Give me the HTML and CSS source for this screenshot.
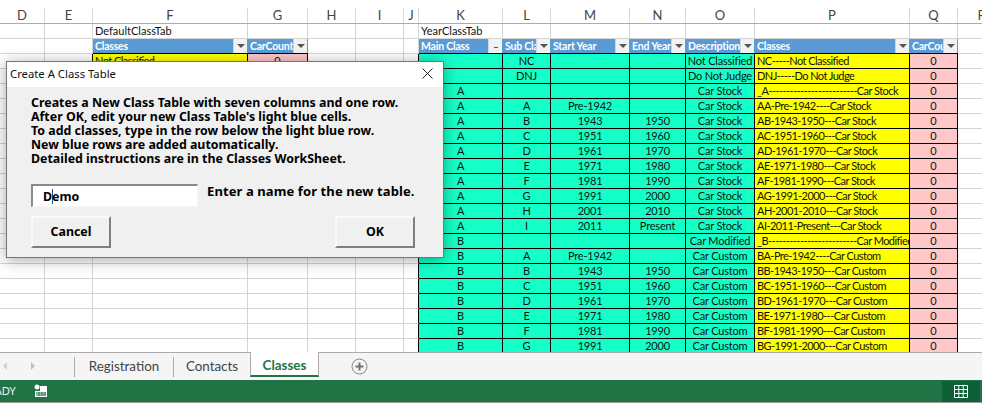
FILE: index.html
```html
<!DOCTYPE html>
<html lang="en">

<head>
    <meta charset="UTF-8">
    <meta name="viewport" content="width=device-width, initial-scale=1.0">
    <title>Create A Class Table</title>
    <link rel="stylesheet" href="styles.css">
</head>

<body>
    <div class="app">
        <div class="sheet">
            <table class="grid">
                <colgroup>
                    <col class="w45"><col class="w48"><col class="w155"><col class="w60"><col class="w48"><col class="w48"><col class="w15">
                    <col class="w84"><col class="w48"><col class="w79"><col class="w56"><col class="w69"><col class="w155"><col class="w48"><col class="w48">
                </colgroup>
                <thead>
                    <tr>
                        <th><div>D</div></th><th><div>E</div></th><th><div>F</div></th><th><div>G</div></th><th><div>H</div></th><th><div>I</div></th><th><div>J</div></th>
                        <th><div>K</div></th><th><div>L</div></th><th><div>M</div></th><th><div>N</div></th><th><div>O</div></th><th><div>P</div></th><th><div>Q</div></th><th><div>R</div></th>
                    </tr>
                </thead>
                <tbody>
                    <tr><td></td><td></td><td>DefaultClassTab</td><td></td><td></td><td></td><td></td><td>YearClassTab</td><td></td><td></td><td></td><td></td><td></td><td></td><td></td></tr>
                    <tr class="heads">
                        <td></td><td></td>
                        <td class="head"><div class="head-in"><span>Classes</span><i class="filter"></i></div></td>
                        <td class="head"><div class="head-in"><span>CarCount</span><i class="filter"></i></div></td>
                        <td></td><td></td><td></td>
                        <td class="head"><div class="head-in"><span>Main Class</span><i class="filter sorted"></i></div></td>
                        <td class="head"><div class="head-in"><span>Sub Class</span><i class="filter"></i></div></td>
                        <td class="head"><div class="head-in"><span>Start Year</span><i class="filter"></i></div></td>
                        <td class="head"><div class="head-in"><span>End Year</span><i class="filter"></i></div></td>
                        <td class="head"><div class="head-in"><span>Description</span><i class="filter"></i></div></td>
                        <td class="head"><div class="head-in"><span>Classes</span><i class="filter"></i></div></td>
                        <td class="head"><div class="head-in"><span>CarCount</span><i class="filter"></i></div></td>
                        <td></td>
                    </tr>
                    <tr><td></td><td class="edge"></td><td class="yel">Not Classified</td><td class="pink">0</td><td></td><td></td><td class="edge"></td><td class="teal"></td><td class="teal">NC</td><td class="teal"></td><td class="teal"></td><td class="teal">Not Classified</td><td class="yel">NC-----Not Classified</td><td class="pink">0</td><td></td></tr>
                    <tr><td></td><td></td><td></td><td></td><td></td><td></td><td class="edge"></td><td class="teal"></td><td class="teal">DNJ</td><td class="teal"></td><td class="teal"></td><td class="teal">Do Not Judge</td><td class="yel">DNJ-----Do Not Judge</td><td class="pink">0</td><td></td></tr>
                    <tr><td></td><td></td><td></td><td></td><td></td><td></td><td class="edge"></td><td class="teal">A</td><td class="teal"></td><td class="teal"></td><td class="teal"></td><td class="teal">Car Stock</td><td class="yel">_A-------------------------Car Stock</td><td class="pink">0</td><td></td></tr>
                    <tr><td></td><td></td><td></td><td></td><td></td><td></td><td class="edge"></td><td class="teal">A</td><td class="teal">A</td><td class="teal">Pre-1942</td><td class="teal"></td><td class="teal">Car Stock</td><td class="yel">AA-Pre-1942----Car Stock</td><td class="pink">0</td><td></td></tr>
                    <tr><td></td><td></td><td></td><td></td><td></td><td></td><td class="edge"></td><td class="teal">A</td><td class="teal">B</td><td class="teal">1943</td><td class="teal">1950</td><td class="teal">Car Stock</td><td class="yel">AB-1943-1950---Car Stock</td><td class="pink">0</td><td></td></tr>
                    <tr><td></td><td></td><td></td><td></td><td></td><td></td><td class="edge"></td><td class="teal">A</td><td class="teal">C</td><td class="teal">1951</td><td class="teal">1960</td><td class="teal">Car Stock</td><td class="yel">AC-1951-1960---Car Stock</td><td class="pink">0</td><td></td></tr>
                    <tr><td></td><td></td><td></td><td></td><td></td><td></td><td class="edge"></td><td class="teal">A</td><td class="teal">D</td><td class="teal">1961</td><td class="teal">1970</td><td class="teal">Car Stock</td><td class="yel">AD-1961-1970---Car Stock</td><td class="pink">0</td><td></td></tr>
                    <tr><td></td><td></td><td></td><td></td><td></td><td></td><td class="edge"></td><td class="teal">A</td><td class="teal">E</td><td class="teal">1971</td><td class="teal">1980</td><td class="teal">Car Stock</td><td class="yel">AE-1971-1980---Car Stock</td><td class="pink">0</td><td></td></tr>
                    <tr><td></td><td></td><td></td><td></td><td></td><td></td><td class="edge"></td><td class="teal">A</td><td class="teal">F</td><td class="teal">1981</td><td class="teal">1990</td><td class="teal">Car Stock</td><td class="yel">AF-1981-1990---Car Stock</td><td class="pink">0</td><td></td></tr>
                    <tr><td></td><td></td><td></td><td></td><td></td><td></td><td class="edge"></td><td class="teal">A</td><td class="teal">G</td><td class="teal">1991</td><td class="teal">2000</td><td class="teal">Car Stock</td><td class="yel">AG-1991-2000---Car Stock</td><td class="pink">0</td><td></td></tr>
                    <tr><td></td><td></td><td></td><td></td><td></td><td></td><td class="edge"></td><td class="teal">A</td><td class="teal">H</td><td class="teal">2001</td><td class="teal">2010</td><td class="teal">Car Stock</td><td class="yel">AH-2001-2010---Car Stock</td><td class="pink">0</td><td></td></tr>
                    <tr><td></td><td></td><td></td><td></td><td></td><td></td><td class="edge"></td><td class="teal">A</td><td class="teal">I</td><td class="teal">2011</td><td class="teal">Present</td><td class="teal">Car Stock</td><td class="yel">AI-2011-Present---Car Stock</td><td class="pink">0</td><td></td></tr>
                    <tr><td></td><td></td><td></td><td></td><td></td><td></td><td class="edge"></td><td class="teal">B</td><td class="teal"></td><td class="teal"></td><td class="teal"></td><td class="teal">Car Modified</td><td class="yel">_B-------------------------Car Modified</td><td class="pink">0</td><td></td></tr>
                    <tr><td></td><td></td><td></td><td></td><td></td><td></td><td class="edge"></td><td class="teal">B</td><td class="teal">A</td><td class="teal">Pre-1942</td><td class="teal"></td><td class="teal">Car Custom</td><td class="yel">BA-Pre-1942----Car Custom</td><td class="pink">0</td><td></td></tr>
                    <tr><td></td><td></td><td></td><td></td><td></td><td></td><td class="edge"></td><td class="teal">B</td><td class="teal">B</td><td class="teal">1943</td><td class="teal">1950</td><td class="teal">Car Custom</td><td class="yel">BB-1943-1950---Car Custom</td><td class="pink">0</td><td></td></tr>
                    <tr><td></td><td></td><td></td><td></td><td></td><td></td><td class="edge"></td><td class="teal">B</td><td class="teal">C</td><td class="teal">1951</td><td class="teal">1960</td><td class="teal">Car Custom</td><td class="yel">BC-1951-1960---Car Custom</td><td class="pink">0</td><td></td></tr>
                    <tr><td></td><td></td><td></td><td></td><td></td><td></td><td class="edge"></td><td class="teal">B</td><td class="teal">D</td><td class="teal">1961</td><td class="teal">1970</td><td class="teal">Car Custom</td><td class="yel">BD-1961-1970---Car Custom</td><td class="pink">0</td><td></td></tr>
                    <tr><td></td><td></td><td></td><td></td><td></td><td></td><td class="edge"></td><td class="teal">B</td><td class="teal">E</td><td class="teal">1971</td><td class="teal">1980</td><td class="teal">Car Custom</td><td class="yel">BE-1971-1980---Car Custom</td><td class="pink">0</td><td></td></tr>
                    <tr><td></td><td></td><td></td><td></td><td></td><td></td><td class="edge"></td><td class="teal">B</td><td class="teal">F</td><td class="teal">1981</td><td class="teal">1990</td><td class="teal">Car Custom</td><td class="yel">BF-1981-1990---Car Custom</td><td class="pink">0</td><td></td></tr>
                    <tr><td></td><td></td><td></td><td></td><td></td><td></td><td class="edge"></td><td class="teal">B</td><td class="teal">G</td><td class="teal">1991</td><td class="teal">2000</td><td class="teal">Car Custom</td><td class="yel">BG-1991-2000---Car Custom</td><td class="pink">0</td><td></td></tr>
                </tbody>
            </table>
        </div>

        <div class="tabbar">
            <div class="arrows">
                <span class="arrow-left"></span>
                <span class="arrow-right"></span>
            </div>
            <div class="tab tab-reg">Registration</div>
            <div class="tab tab-con">Contacts</div>
            <div class="tab active">Classes</div>
            <svg class="add-sheet" width="17" height="17" viewBox="0 0 17 17">
                <circle cx="8.5" cy="8.5" r="7.5" fill="none" stroke="#808080" stroke-width="1"/>
                <path d="M8.5 4.5v8M4.5 8.5h8" stroke="#707070" stroke-width="2" fill="none"/>
            </svg>
        </div>

        <div class="status">
            <span class="ready">READY</span>
            <svg class="macro" width="14" height="14" viewBox="0 0 14 14">
                <circle cx="3" cy="3" r="2.5" fill="#fff"/>
                <path d="M6 2h7v11H1V7h5z" fill="#fff"/>
                <path d="M2 9h10M2 11h10M5 8v4M8 8v4M11 8v4" stroke="#217346" stroke-width="1" fill="none"/>
            </svg>
            <div class="view-btn">
                <svg width="14" height="13" viewBox="0 0 14 13">
                    <path d="M.5.5h13v12H.5zM.5 4.5h13M.5 8.5h13M4.8.5v12M9.2.5v12" stroke="#fff" stroke-width="1" fill="none"/>
                </svg>
            </div>
        </div>

        <div class="dialog">
            <div class="dialog-title">
                <span>Create A Class Table</span>
                <svg width="11" height="11" viewBox="0 0 11 11">
                    <path d="M.5.5l10 10M10.5.5l-10 10" stroke="#222" stroke-width="1" fill="none"/>
                </svg>
            </div>
            <div class="dialog-body">
                <p class="intro">
                    Creates a New Class Table with seven columns and one row.<br>
                    After OK, edit your new Class Table's light blue cells.<br>
                    To add classes, type in the row below the light blue row.<br>
                    New blue rows are added automatically.<br>
                    Detailed instructions are in the Classes WorkSheet.
                </p>
                <div class="name-row">
                    <div class="name-input">D<span class="caret"></span>emo</div>
                    <label class="name-label">Enter a name for the new table.</label>
                </div>
                <div class="actions">
                    <button class="btn">Cancel</button>
                    <button class="btn">OK</button>
                </div>
            </div>
        </div>
    </div>
</body>

</html>
```

FILE: styles.css
```css
body {
    margin: 0;
    padding: 0;
    background-color: #fff;
    font-family: Lato, 'Noto Sans', sans-serif;
}

.app {
    position: relative;
    width: 982px;
    height: 403px;
    overflow: hidden;
    display: flex;
    flex-direction: column;
}

/* worksheet */
.sheet {
    height: 352px;
    overflow: hidden;
    flex: none;
}

.grid {
    width: 1006px;
    table-layout: fixed;
    border-collapse: separate;
    border-spacing: 0;
    font-size: 11px;
    color: #111;
}

.w15 { width: 15px; }
.w45 { width: 45px; }
.w48 { width: 48px; }
.w56 { width: 56px; }
.w60 { width: 60px; }
.w69 { width: 69px; }
.w79 { width: 79px; }
.w84 { width: 84px; }
.w155 { width: 155px; }

th {
    height: 24px;
    padding: 8px 0 0;
    box-sizing: border-box;
    border-bottom: 1px solid #ababab;
    font-weight: normal;
    font-size: 13px;
    color: #444;
}

th div {
    height: 15px;
    line-height: 15px;
    border-right: 1px solid #d8d8d8;
}

td {
    height: 15px;
    box-sizing: border-box;
    padding: 0 2px;
    line-height: 14px;
    border-right: 1px solid #d4d4d4;
    border-bottom: 1px solid #d4d4d4;
    white-space: nowrap;
    overflow: hidden;
}

td.edge {
    border-right-color: #000;
}

.teal,
.pink,
.yel {
    border-right-color: #000;
    border-bottom-color: #000;
}

.teal {
    background-color: #14ffc8;
    text-align: center;
    padding: 0;
    letter-spacing: -0.2px;
}

.pink {
    background-color: #ffc7c7;
    text-align: center;
}

.yel {
    background-color: #ff0;
    letter-spacing: -0.55px;
}

td.head {
    padding: 0;
    background-color: #5b9bd5;
    border-right: 0;
    border-bottom-color: #000;
    color: #fff;
    font-size: 10.5px;
    font-weight: bold;
    letter-spacing: -0.2px;
}

.head-in {
    display: flex;
    align-items: center;
    height: 14px;
    padding-left: 2px;
}

.head-in span {
    flex: 1;
    min-width: 0;
    overflow: hidden;
}

.filter {
    flex: none;
    position: relative;
    width: 15px;
    height: 14px;
    background-color: #f2f2f2;
    border-left: 1px solid #c8d8e8;
    border-right: 1px solid #5b9bd5;
    box-sizing: border-box;
}

.filter::after {
    content: "";
    position: absolute;
    left: 3px;
    top: 5px;
    border-left: 4px solid transparent;
    border-right: 4px solid transparent;
    border-top: 4px solid #555;
}

.filter.sorted::after {
    left: 5px;
    top: 8px;
    border: 0;
    width: 4px;
    height: 1px;
    background-color: #555;
}

/* sheet tabs */
.tabbar {
    height: 28px;
    flex: none;
    box-sizing: border-box;
    border-top: 1px solid #ababab;
    background-color: #f5f5f5;
    display: flex;
    align-items: flex-start;
    font-size: 13.4px;
    color: #444;
}

.arrows {
    width: 74px;
    flex: none;
    display: flex;
    padding: 9px 0 0 3px;
    box-sizing: border-box;
    gap: 24px;
}

.arrow-left,
.arrow-right {
    border-top: 4px solid transparent;
    border-bottom: 4px solid transparent;
}

.arrow-left {
    border-right: 4px solid #d0d0d0;
}

.arrow-right {
    border-left: 4px solid #c0c0c0;
}

.tab {
    margin-top: 4px;
    height: 20px;
    line-height: 19px;
    box-sizing: border-box;
    text-align: center;
    border-left: 1px solid #ababab;
}

.tab-reg { width: 99px; }
.tab-con { width: 77px; }

.tab.active {
    width: 69px;
    margin-top: -1px;
    height: 25px;
    line-height: 27px;
    background-color: #fff;
    border-left: 1px solid #ababab;
    border-right: 1px solid #ababab;
    border-bottom: 2px solid #217346;
    color: #217346;
    font-weight: bold;
}

.add-sheet {
    margin: 5px 0 0 32px;
}

/* status bar */
.status {
    height: 23px;
    flex: none;
    box-sizing: border-box;
    background-color: #217346;
    border-bottom: 1px solid #9a9a9a;
    display: flex;
    align-items: center;
    color: #e8f0ea;
    font-size: 10.5px;
}

.ready {
    margin-left: -18px;
    width: 52px;
    flex: none;
}

.view-btn {
    margin-left: auto;
    margin-right: 2px;
    width: 38px;
    height: 21px;
    background-color: #0f5f37;
    display: flex;
    align-items: center;
    justify-content: center;
}

/* dialog over the sheet */
.dialog {
    position: absolute;
    left: 6px;
    top: 61px;
    width: 438px;
    height: 197px;
    box-sizing: border-box;
    border: 1px solid #767676;
    background-color: #f0f0f0;
    box-shadow: 0 2px 14px rgba(0, 0, 0, 0.35);
}

.dialog-title {
    height: 25px;
    box-sizing: border-box;
    padding: 0 10px 2px 3px;
    background-color: #fff;
    display: flex;
    align-items: center;
    justify-content: space-between;
    font-family: 'Noto Sans', sans-serif;
    font-size: 11.3px;
    color: #111;
}

.dialog-body {
    padding: 9px 28px 0 24px;
    font-family: 'Noto Sans', sans-serif;
    font-size: 12.4px;
    font-weight: bold;
    color: #000;
}

.intro {
    margin: 0;
    line-height: 14px;
}

.name-row {
    display: flex;
    align-items: flex-start;
    margin-top: 18px;
}

.name-input {
    width: 167px;
    height: 23px;
    box-sizing: border-box;
    background-color: #fff;
    border-top: 2px solid #8a8a8a;
    border-left: 2px solid #8a8a8a;
    border-bottom: 1px solid #f8f8f8;
    border-right: 1px solid #f8f8f8;
    padding: 2px 0 0 10px;
    line-height: 17px;
}

.caret {
    display: inline-block;
    width: 1px;
    height: 15px;
    margin-right: -1px;
    vertical-align: -3px;
    background-color: #1f4fa0;
}

.name-label {
    margin-left: 9px;
    font-size: 13px;
    letter-spacing: 0.1px;
    line-height: 15px;
}

.actions {
    display: flex;
    justify-content: space-between;
    margin-top: 9px;
}

.btn {
    width: 80px;
    height: 32px;
    padding: 0 0 1px;
    box-sizing: border-box;
    background-color: #f0f0f0;
    border: 2px solid;
    border-color: #fafafa #7f7f7f #7f7f7f #fafafa;
    font: inherit;
    color: #000;
}
```
